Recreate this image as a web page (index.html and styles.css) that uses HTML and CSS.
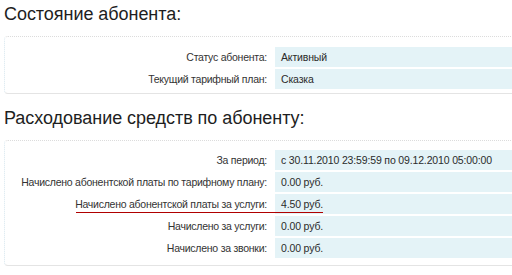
FILE: index.html
```html
<!DOCTYPE html>
<html lang="ru">
<head>
  <meta charset="UTF-8" />
  <title>Абонент</title>
  <link rel="stylesheet" href="styles.css">
</head>
<body>
  <div class="page">
    <h2 class="section-title">Состояние абонента:</h2>
    <div class="panel panel-state">
      <div class="info">
        <div class="label">Статус абонента:</div>
        <div class="value">Активный</div>
        <div class="label">Текущий тарифный план:</div>
        <div class="value">Сказка</div>
      </div>
    </div>

    <h2 class="section-title">Расходование средств по абоненту:</h2>
    <div class="panel panel-spend">
      <div class="info">
        <div class="label">За период:</div>
        <div class="value">с 30.11.2010 23:59:59 по 09.12.2010 05:00:00</div>
        <div class="label">Начислено абонентской платы по тарифному плану:</div>
        <div class="value">0.00 руб.</div>
        <div class="label">Начислено абонентской платы за услуги:</div>
        <div class="value">4.50 руб.</div>
        <div class="label">Начислено за услуги:</div>
        <div class="value">0.00 руб.</div>
        <div class="label">Начислено за звонки:</div>
        <div class="value">0.00 руб.</div>
      </div>
      <!-- pen mark under the service fee row -->
      <div class="mark"></div>
    </div>
  </div>
</body>
</html>
```

FILE: styles.css
```css
body {
  margin: 0;
  background: #fff;
  font-family: 'Liberation Sans', Arial, sans-serif;
  color: #333;
  overflow: hidden;
}

.page {
  width: 580px;
  padding-left: 4px;
}

.section-title {
  margin: 0;
  font-family: 'Liberation Sans', Arial, sans-serif;
  font-weight: normal;
  font-size: 18px;
  letter-spacing: -0.05px;
  line-height: 28px;
  height: 36px;
  color: #1e1e1e;
}

.panel {
  position: relative;
  border: 1px solid #e4e4e4;
  border-top: 1px dotted #dcdcdc;
  border-left: 1px dotted #d6e6ee;
  border-radius: 4px;
  background: #fff;
}

.panel-state {
  padding: 10px 0 4px 0;
  margin-bottom: 10px;
}

.panel-spend {
  padding: 9px 0 7px 0;
}

.info {
  display: grid;
  grid-template-columns: 270px 1fr;
  row-gap: 2px;
  font-size: 10.5px;
  letter-spacing: -0.15px;
}

.label,
.value {
  height: 20px;
  line-height: 20px;
  white-space: nowrap;
}

.label {
  text-align: right;
  padding-right: 8px;
  letter-spacing: -0.25px;
  color: #333;
}

.value {
  background: #e4f3f7;
  padding-left: 6px;
  color: #2b2b2b;
}

.mark {
  position: absolute;
  left: 71px;
  top: 71px;
  width: 247px;
  height: 1px;
  background: #b00000;
}
```
